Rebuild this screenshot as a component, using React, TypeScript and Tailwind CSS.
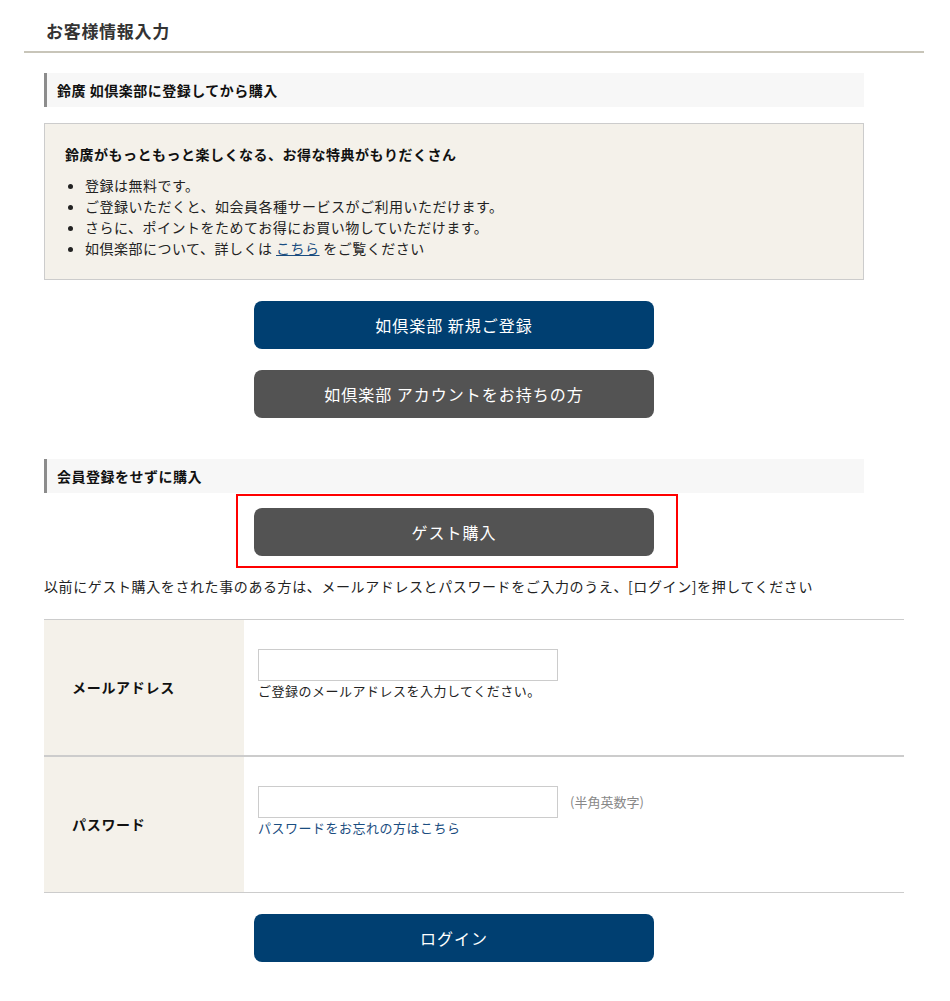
const jp = { fontFamily: '"Noto Sans CJK JP", "Noto Sans", sans-serif' };

const perks = [
  "登録は無料です。",
  "ご登録いただくと、如会員各種サービスがご利用いただけます。",
  "さらに、ポイントをためてお得にお買い物していただけます。",
];

function SectionHead({ children }: { children: React.ReactNode }) {
  return (
    <div className="h-[34px] flex items-center bg-[#f7f7f7] border-l-[3px] border-[#8c8c8c] pl-[10px] text-[14px] tracking-[0.5px] font-bold text-[#111] leading-[20px]">
      {children}
    </div>
  );
}

function Btn({ children, dark }: { children: React.ReactNode; dark?: boolean }) {
  return (
    <button
      className={`w-[400px] h-[48px] rounded-[8px] text-white text-[16px] tracking-[1px] leading-[20px] flex items-center justify-center mx-auto ${
        dark ? "bg-[#535353]" : "bg-[#003f71]"
      }`}
    >
      {children}
    </button>
  );
}

export default function App() {
  return (
    <div className="bg-white w-[950px] min-h-[1001px] text-[#222]" style={jp}>
      <div className="ml-[24px] w-[900px]">
        {/* page title */}
        <div className="pt-[21px] pb-[10px] pl-[22px] border-b-2 border-[#c8c5b9]">
          <h1 className="text-[17px] tracking-[0.7px] leading-[20px] font-bold text-[#333]">お客様情報入力</h1>
        </div>

        <div className="ml-[20px]">
          <div className="w-[820px]">
            <div className="mt-[20px]">
              <SectionHead>鈴廣 如倶楽部に登録してから購入</SectionHead>
            </div>

            {/* perks box */}
            <div className="mt-[16px] bg-[#f4f1ea] border border-[#cccccc] px-[20px] pt-[20px] pb-[20px] tracking-[0.5px]">
              <p className="text-[14px] leading-[20px] font-bold text-[#111]">
                鈴廣がもっともっと楽しくなる、お得な特典がもりだくさん
              </p>
              <ul className="mt-[11px] list-disc pl-[20px] text-[14px] leading-[21px]">
                {perks.map((p) => (
                  <li key={p}>{p}</li>
                ))}
                <li>
                  如倶楽部について、詳しくは{" "}
                  <a href="#" className="text-[#1a4d80] underline">
                    こちら
                  </a>{" "}
                  をご覧ください
                </li>
              </ul>
            </div>

            <div className="mt-[21px]">
              <Btn>如倶楽部 新規ご登録</Btn>
            </div>
            <div className="mt-[21px]">
              <Btn dark>如倶楽部 アカウントをお持ちの方</Btn>
            </div>

            <div className="mt-[41px]">
              <SectionHead>会員登録をせずに購入</SectionHead>
            </div>

            {/* guest purchase, highlighted */}
            <div className="relative mt-[15px]">
              <Btn dark>ゲスト購入</Btn>
              <div className="absolute left-[192px] top-[-14px] w-[442px] h-[74px] border-2 border-[#ff0000] pointer-events-none" />
            </div>
          </div>

          <p className="mt-[20px] text-[14px] tracking-[0.6px] leading-[20px]">
            以前にゲスト購入をされた事のある方は、メールアドレスとパスワードをご入力のうえ、[ログイン]を押してください
          </p>

          {/* login form */}
          <div className="mt-[23px] w-[860px] border-t border-[#cccccc]">
            <div className="grid grid-cols-[200px_1fr] h-[137px] border-b-2 border-[#cccccc]">
              <div className="bg-[#f4f1ea] flex items-center pl-[28px] text-[14px] tracking-[0.7px] font-bold text-[#111]">
                メールアドレス
              </div>
              <div className="pl-[14px] pt-[29px]">
                <input className="block w-[300px] h-[32px] border border-[#cccccc] bg-white outline-none" />
                <p className="mt-[1px] text-[13px] tracking-[0.5px] leading-[18px] text-[#222]">
                  ご登録のメールアドレスを入力してください。
                </p>
              </div>
            </div>
            <div className="grid grid-cols-[200px_1fr] h-[136px] border-b border-[#cccccc]">
              <div className="bg-[#f4f1ea] flex items-center pl-[28px] text-[14px] tracking-[0.7px] font-bold text-[#111]">
                パスワード
              </div>
              <div className="pl-[14px] pt-[29px]">
                <div className="flex items-center gap-[12px]">
                  <input
                    type="password"
                    className="block w-[300px] h-[32px] border border-[#cccccc] bg-white outline-none"
                  />
                  <span className="text-[13px] text-[#888]">(半角英数字)</span>
                </div>
                <a href="#" className="block mt-[1px] text-[13px] tracking-[0.5px] leading-[18px] text-[#1a4d80]">
                  パスワードをお忘れの方はこちら
                </a>
              </div>
            </div>
          </div>

          <div className="w-[820px] mt-[21px] pb-[40px]">
            <Btn>ログイン</Btn>
          </div>
        </div>
      </div>
    </div>
  );
}
